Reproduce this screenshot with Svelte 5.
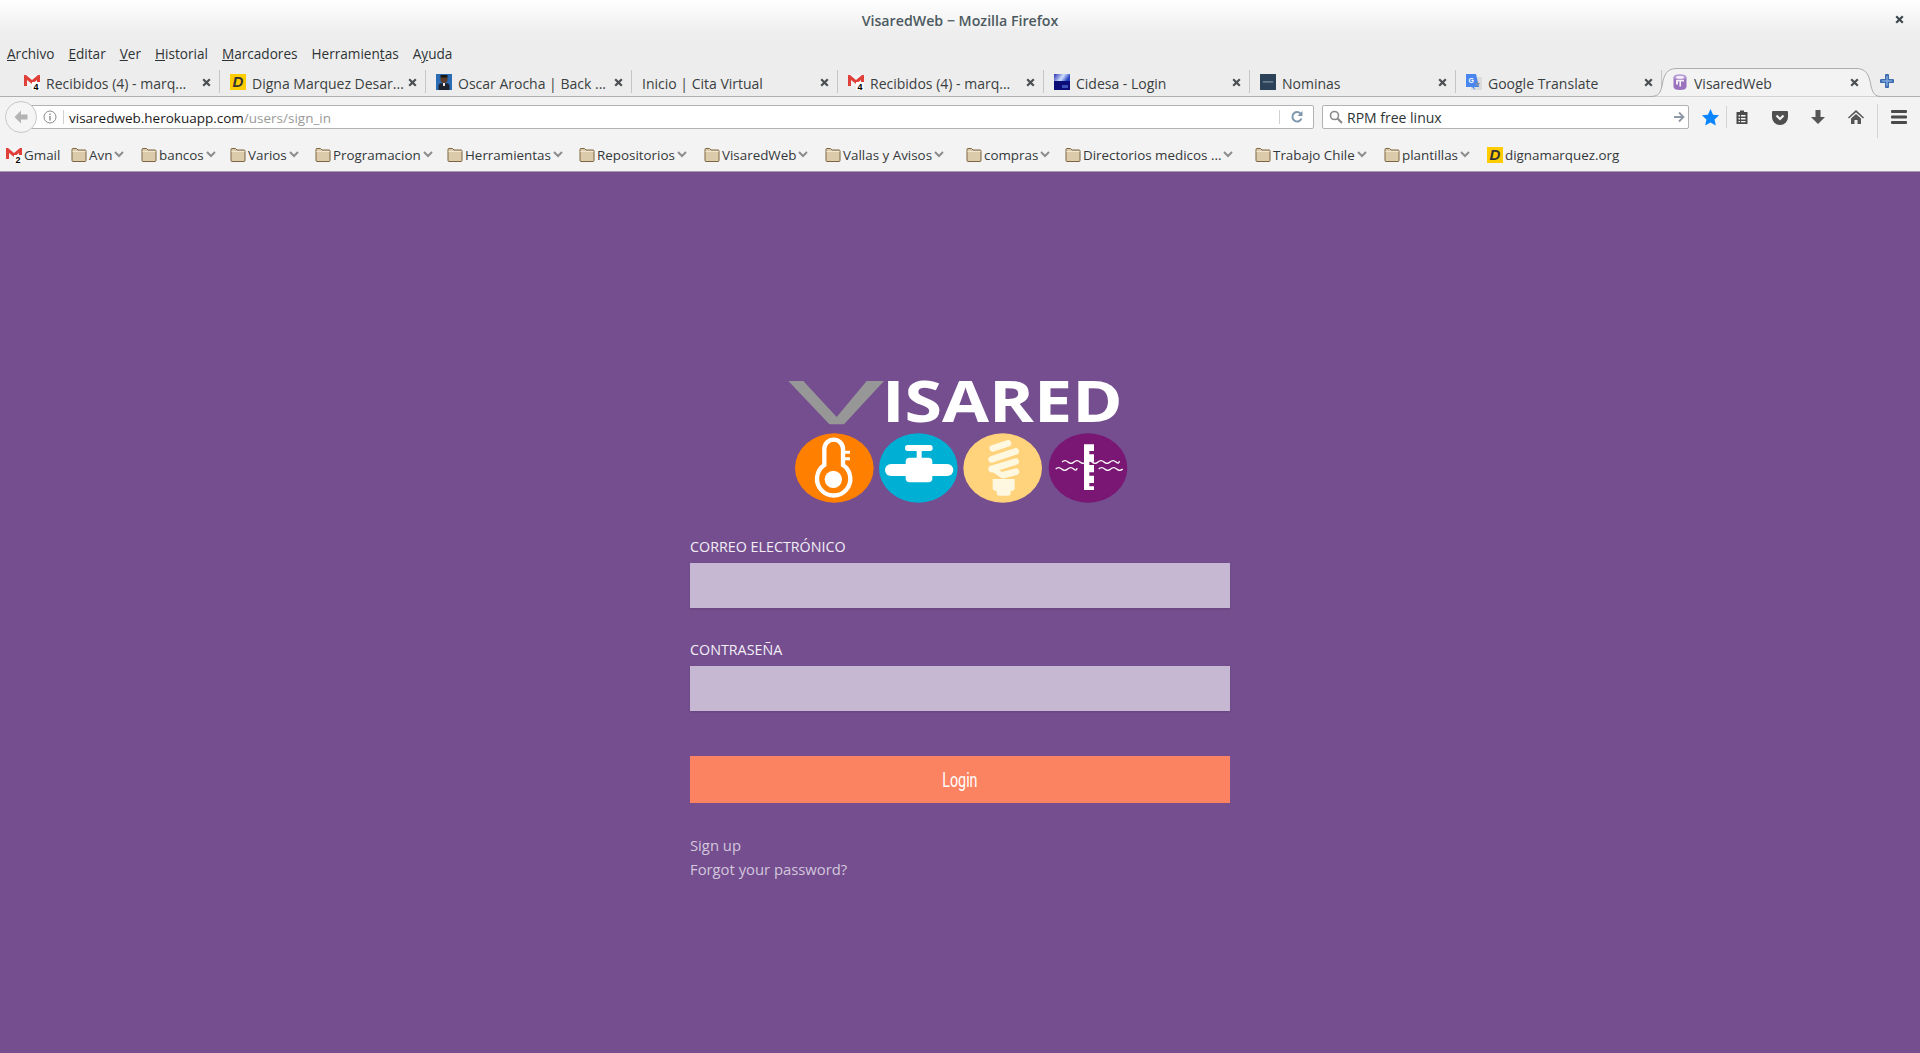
<script>
	const menus = [
		['', 'A', 'rchivo'],
		['', 'E', 'ditar'],
		['', 'V', 'er'],
		['', 'H', 'istorial'],
		['', 'M', 'arcadores'],
		['Herramien', 't', 'as'],
		['A', 'y', 'uda']
	];

	const tabs = [
		{ title: 'Recibidos (4) - marq...', icon: 'gmail' },
		{ title: 'Digna Marquez Desar...', icon: 'digna' },
		{ title: 'Oscar Arocha | Back ...', icon: 'oscar' },
		{ title: 'Inicio | Cita Virtual', icon: 'none' },
		{ title: 'Recibidos (4) - marq...', icon: 'gmail' },
		{ title: 'Cidesa - Login', icon: 'cidesa' },
		{ title: 'Nominas', icon: 'nominas' },
		{ title: 'Google Translate', icon: 'translate' }
	];

	const bookmarks = [
		{ label: 'Avn', w: 70 },
		{ label: 'bancos', w: 89 },
		{ label: 'Varios', w: 85 },
		{ label: 'Programacion', w: 132 },
		{ label: 'Herramientas', w: 132 },
		{ label: 'Repositorios', w: 125 },
		{ label: 'VisaredWeb', w: 121 },
		{ label: 'Vallas y Avisos', w: 141 },
		{ label: 'compras', w: 99 },
		{ label: 'Directorios medicos ...', w: 190 },
		{ label: 'Trabajo Chile', w: 129 },
		{ label: 'plantillas', w: 103 }
	];
</script>

{#snippet favicon(kind, num = '4')}
	{#if kind === 'gmail'}
		<svg class="fav" viewBox="0 0 16 16">
			<rect x="0" y="1" width="16" height="11" fill="#f4f4f4" />
			<path d="M0 1h2l6 5 6-5h2v11h-3V6L8 10 3 6v6H0z" fill="#e0403a" />
			<rect x="8" y="8" width="8" height="8" fill="#fff" />
			<text x="9.500" y="15.500" class="fav-num">{num}</text>
		</svg>
	{:else if kind === 'digna'}
		<span class="fav fav-d">D</span>
	{:else if kind === 'oscar'}
		<svg class="fav" viewBox="0 0 16 16">
			<rect width="16" height="16" fill="#2b6cb5" />
			<circle cx="8" cy="5.500" r="3.600" fill="#5c3d2a" />
			<rect x="4.500" y="1" width="7" height="2.600" fill="#1d1712" />
			<path d="M2.500 16v-4q0-2.500 3-2.800h5q3 .3 3 2.800v4z" fill="#1d2430" />
			<rect x="7" y="9" width="2" height="3" fill="#e8e8e8" />
		</svg>
	{:else if kind === 'cidesa'}
		<svg class="fav" viewBox="0 0 16 16">
			<defs>
				<linearGradient id="cid" x1="0" y1="0" x2="1" y2="0.3">
					<stop offset="0" stop-color="#2a2fb0" />
					<stop offset="0.6" stop-color="#cfe0ff" />
					<stop offset="1" stop-color="#2a44c0" />
				</linearGradient>
			</defs>
			<rect width="16" height="16" fill="#0c0c78" />
			<rect width="16" height="7" fill="url(#cid)" />
			<rect x="8" y="11" width="6" height="3" fill="#3a50b8" />
		</svg>
	{:else if kind === 'nominas'}
		<svg class="fav" viewBox="0 0 16 16">
			<rect width="16" height="16" fill="#2c4258" />
			<rect x="3" y="7.300" width="10" height="1.200" fill="#8496a6" />
		</svg>
	{:else if kind === 'translate'}
		<svg class="fav" viewBox="0 0 16 16">
			<rect x="5" y="3" width="11" height="13" fill="#dcdcdc" />
			<path d="M0 0h10l3 13H8l1 3-3-3H0z" fill="#4a86f0" />
			<text x="2.600" y="8.600" class="fav-g">G</text>
			<path d="M11.500 7l.8 2h2l-1.600 1.400.6 2.100-1.800-1.200-1.600 1.200.5-2.100L9 9h2z" fill="#7d8fa8" />
		</svg>
	{:else if kind === 'visared'}
		<svg class="fav" viewBox="0 0 16 16">
			<path d="M1.500 3.500v9Q1.500 16 8 16t6.500-3.500v-9z" fill="#9a72bd" />
			<ellipse cx="8" cy="3.200" rx="6.500" ry="3" fill="#b79ad1" />
			<ellipse cx="8" cy="3.200" rx="4" ry="1.500" fill="#f3eef7" />
			<path d="M4 6h8v1.600H9v5H7.400v-5H6v3H4z" fill="#f3eef7" />
		</svg>
	{/if}
{/snippet}

{#snippet folder()}
	<svg class="folder" viewBox="0 0 16 16">
		<path
			d="M1 4V2.500Q1 1.500 2 1.500h3.500L7 3h7q1 0 1 1v9.500q0 1-1 1H2q-1 0-1-1z"
			fill="#dccbaa"
			stroke="#7d6542"
		/>
		<path d="M1.500 4.500h13" stroke="#f0e6d0" />
	</svg>
{/snippet}

{#snippet chevron()}
	<svg class="chev" viewBox="0 0 10 7">
		<path d="M1 1l4 4 4-4" fill="none" stroke="#8d8d8d" stroke-width="2" />
	</svg>
{/snippet}

{#snippet closeX()}
	<svg class="close" viewBox="0 0 9 9">
		<path d="M1.200 1.200l6.600 6.600M7.800 1.200L1.200 7.800" stroke="#4b4f52" stroke-width="2.200" />
	</svg>
{/snippet}

<div class="browser">
	<header class="titlebar">
		<span class="title">VisaredWeb − Mozilla Firefox</span>
		<svg class="win-close" viewBox="0 0 9 9">
			<path d="M1.200 1.200l6.600 6.600M7.800 1.200L1.200 7.800" stroke="#3e4a50" stroke-width="2.200" />
		</svg>
	</header>

	<nav class="menubar">
		{#each menus as [before, key, after]}
			<span class="menu">{before}<u>{key}</u>{after}</span>
		{/each}
	</nav>

	<div class="tabstrip">
		{#each tabs as tab}
			<div class="tab">
				{#if tab.icon !== 'none'}
					<span class="fav-slot">{@render favicon(tab.icon)}</span>
				{/if}
				<span class="tab-title">{tab.title}</span>
				{@render closeX()}
			</div>
		{/each}
		<div class="tab tab-active">
			<svg class="tab-shape" viewBox="0 0 232 29">
				<path
					d="M0 28.500C8 28.500 10 26 12 18 14 6 17 .5 27 .5H206C216 .5 219 6 221 18 223 26 225 28.500 232 28.500"
					fill="#f3f3f3"
					stroke="#a9adaf"
				/>
			</svg>
			<span class="fav-slot">{@render favicon('visared')}</span>
			<span class="tab-title">VisaredWeb</span>
			{@render closeX()}
		</div>
		<svg class="newtab" viewBox="0 0 14 14">
			<path d="M7 1.500v11M1.500 7h11" stroke="#3c6cae" stroke-width="4" stroke-linecap="round" />
			<path d="M7 2.500v9M2.500 7h9" stroke="#7ea6dc" stroke-width="1.500" stroke-linecap="round" />
		</svg>
	</div>

	<div class="navbar">
		<button class="back" aria-label="Atrás">
			<svg viewBox="0 0 16 16" width="16" height="16">
				<path d="M8 1.500L1.500 8 8 14.500V10.500h6.500v-5H8z" fill="#b4b4b4" />
			</svg>
		</button>
		<div class="urlbar">
			<svg class="info" viewBox="0 0 14 14">
				<circle cx="7" cy="7" r="6" fill="none" stroke="#8a8a8a" />
				<rect x="6.300" y="6" width="1.400" height="4.500" fill="#8a8a8a" />
				<rect x="6.300" y="3.500" width="1.400" height="1.500" fill="#8a8a8a" />
			</svg>
			<span class="url">visaredweb.herokuapp.com<span class="url-path">/users/sign_in</span></span>
			<svg class="reload" viewBox="0 0 14 14">
				<path d="M11.500 8.500A4.700 4.700 0 1 1 10.500 3.500" fill="none" stroke="#7f97ad" stroke-width="2" />
				<path d="M12.500 1v5h-5z" fill="#7f97ad" />
			</svg>
		</div>
		<div class="searchbar">
			<svg class="mag" viewBox="0 0 14 14">
				<circle cx="5.500" cy="5.500" r="4" fill="none" stroke="#8a8a8a" stroke-width="1.600" />
				<path d="M8.500 8.500l4.500 4.500" stroke="#8a8a8a" stroke-width="2.200" />
			</svg>
			<span class="query">RPM free linux</span>
			<svg class="go" viewBox="0 0 12 12">
				<path d="M1 6h9M6 1.500L10.500 6 6 10.500" fill="none" stroke="#8d99a6" stroke-width="1.800" />
			</svg>
		</div>
		<div class="tools">
			<svg class="tool star" viewBox="0 0 20 20">
				<path d="M10 1l2.700 6 6.300.7-4.700 4.300 1.300 6.500L10 15.200 4.400 18.500l1.300-6.500L1 7.700 7.300 7z" fill="#0a84ff" />
			</svg>
			<span class="vsep"></span>
			<svg class="tool clip" viewBox="0 0 16 16">
				<path d="M6 1.500h4V3h3.500v12h-11V3H6z" fill="#4a4a4a" />
				<path d="M4.500 6h1.500v1.500H4.500zM7 6h4.500v1.500H7zM4.500 9h1.500v1.500H4.500zM7 9h4.500v1.500H7zM4.500 12h1.500v1.200H4.500zM7 12h4.500v1.200H7z" fill="#f3f3f3" />
			</svg>
			<svg class="tool pocket" viewBox="0 0 16 16">
				<path d="M1 2h14q1 0 1 1v5A8 8 0 0 1 0 8V3q0-1 1-1z" fill="#4f4f4f" />
				<path d="M4.500 6.500L8 10l3.500-3.500" fill="none" stroke="#f3f3f3" stroke-width="2.200" />
			</svg>
			<svg class="tool down" viewBox="0 0 16 16">
				<path d="M5.500 1h5v7H15l-7 7-7-7h4.500z" fill="#555" />
			</svg>
			<svg class="tool home" viewBox="0 0 16 16">
				<path d="M8 1L0 8.500l1 1L8 3.200l7 6.300 1-1z" fill="#555" />
				<path d="M3 9.500L8 5l5 4.500V15H9.500v-4h-3v4H3z" fill="#555" />
			</svg>
			<span class="vsep tall"></span>
			<svg class="tool burger" viewBox="0 0 16 14">
				<path d="M1 0h14q1 0 1 1v1q0 1-1 1H1Q0 3 0 2V1q0-1 1-1zM1 5.500h14q1 0 1 1v1q0 1-1 1H1q-1 0-1-1v-1q0-1 1-1zM1 11h14q1 0 1 1v1q0 1-1 1H1q-1 0-1-1v-1q0-1 1-1z" fill="#4a4a4a" />
			</svg>
		</div>
	</div>

	<div class="bookmarks">
		<div class="bookmark gmail-mark">
			<span class="fav-slot">{@render favicon('gmail', '2')}</span>
			<span>Gmail</span>
		</div>
		{#each bookmarks as mark}
			<div class="bookmark" style="width: {mark.w}px">
				{@render folder()}
				<span class="mark-label">{mark.label}</span>
				{@render chevron()}
			</div>
		{/each}
		<div class="bookmark">
			<span class="fav-slot">{@render favicon('digna')}</span>
			<span>dignamarquez.org</span>
		</div>
	</div>

	<main class="page">
		<div class="login">
			<svg class="logo" viewBox="0 0 1140 450" role="img" aria-label="Visared">
				<path d="M55 48h45l100 108 90-108h52L222 178h-44z" fill="#979797" />
				<text x="336" y="172" class="logo-text" textLength="722" lengthAdjust="spacingAndGlyphs">ISARED</text>

				<ellipse cx="193" cy="309" rx="118" ry="104" fill="#ff7f00" />
				<path
					d="M163 300V252a28 28 0 0 1 56 0V300a50 50 0 1 1-56 0z"
					fill="none"
					stroke="#fff"
					stroke-width="13"
				/>
				<circle cx="190" cy="343" r="26" fill="#fff" />
				<path d="M222 262h18M222 281h18" stroke="#fff" stroke-width="9" />

				<ellipse cx="445" cy="309" rx="118" ry="104" fill="#00afd4" />
				<rect x="345" y="297" width="205" height="36" rx="18" fill="#fff" />
				<rect x="407" y="278" width="80" height="74" rx="12" fill="#fff" />
				<rect x="440" y="245" width="15" height="40" fill="#fff" />
				<rect x="405" y="240" width="83" height="18" rx="8" fill="#fff" />

				<ellipse cx="698" cy="309" rx="118" ry="104" fill="#ffd27c" />
				<g stroke="#fff8e0" stroke-width="20" stroke-linecap="round">
					<path d="M668 250l46-15" />
					<path d="M665 283l72-24" />
					<path d="M665 312l72-22" />
					<path d="M700 330l38-10" />
				</g>
				<path d="M668 342h66v28q0 8-12 8v8q0 6-8 6h-26q-8 0-8-6v-8q-12 0-12-8z" fill="#fff8e0" />
				<path d="M665 310l30 20" stroke="#fff8e0" stroke-width="16" stroke-linecap="round" />

				<ellipse cx="954" cy="309" rx="118" ry="104" fill="#7a1673" />
				<path
					d="M942 238h30v20h-14v10h14v22h-14v10h14v22h-14v10h14v22h-14v10h14v11h-30z"
					fill="#fff"
				/>
				<g fill="none" stroke="#fff" stroke-width="4">
					<path d="M876 291q9-8 18 0t18 0 18 0 18 0 18 0 18 0 18 0 18 0 18 0 10-3" />
					<path d="M857 312q9-8 18 0t18 0 18 0 10-3M986 312q9-8 18 0t18 0 18 0 18 0" />
				</g>
			</svg>

			<form class="form">
				<label for="email">CORREO ELECTRÓNICO</label>
				<input id="email" type="email" />
				<label for="password" class="second">CONTRASEÑA</label>
				<input id="password" type="password" />
				<button type="button" class="submit"><span>Login</span></button>
			</form>

			<div class="links">
				<span>Sign up</span>
				<span>Forgot your password?</span>
			</div>
		</div>
	</main>
</div>

<style>
	:global(body) {
		margin: 0;
		background: #744e8f;
	}

	.browser {
		height: 1053px;
		display: flex;
		flex-direction: column;
		overflow: hidden;
		font-family: 'Open Sans', sans-serif;
		font-size: 14px;
		color: #2e3436;
	}

	.titlebar {
		height: 40px;
		flex: none;
		display: flex;
		align-items: center;
		justify-content: center;
		position: relative;
		background: linear-gradient(#ffffff, #ededed 34px);
	}

	.title {
		font-weight: 600;
		font-size: 14.2px;
		color: #4c5a60;
	}

	.win-close {
		position: absolute;
		right: 16px;
		top: 15px;
		width: 9px;
		height: 9px;
	}

	.menubar {
		height: 28px;
		flex: none;
		box-sizing: border-box;
		display: flex;
		align-items: center;
		gap: 14px;
		padding: 0 0 2px 7px;
		font-size: 13.6px;
		background: #ededed;
	}

	.tabstrip {
		height: 28px;
		flex: none;
		display: flex;
		padding-left: 14px;
		background: #ededed;
		border-bottom: 1px solid #adb0b2;
		position: relative;
	}

	.tab {
		width: 206px;
		height: 28px;
		flex: none;
		box-sizing: border-box;
		display: flex;
		align-items: center;
		padding-left: 10px;
		position: relative;
		color: #3a3f41;
	}

	.tab::after {
		content: '';
		position: absolute;
		right: 0;
		top: 2px;
		bottom: 3px;
		width: 1px;
		background: #c6c6c6;
	}

	.tab-active::after {
		display: none;
	}

	.tab-shape {
		position: absolute;
		left: -12px;
		top: 0;
		width: 232px;
		height: 29px;
	}

	.tab-active > :not(.tab-shape) {
		position: relative;
	}

	.fav-slot {
		width: 16px;
		height: 16px;
		flex: none;
		margin-right: 6px;
		display: block;
	}

	.fav {
		display: block;
		width: 16px;
		height: 16px;
	}

	.fav-num {
		font-family: 'Liberation Sans', sans-serif;
		font-size: 9px;
		font-weight: 700;
		fill: #000;
	}

	.fav-g {
		font-family: 'Liberation Sans', sans-serif;
		font-size: 7px;
		font-weight: 700;
		fill: #fff;
	}

	.fav-d {
		background: #ffcc00;
		color: #333;
		font: italic 700 15px/16px 'Liberation Sans', sans-serif;
		text-align: center;
	}

	.tab-title {
		flex: 1;
		padding-top: 2px;
		white-space: nowrap;
		overflow: hidden;
	}

	.close {
		width: 9px;
		height: 9px;
		flex: none;
		margin-right: 9px;
	}

	.newtab {
		width: 14px;
		height: 14px;
		margin: 6px 0 0 12px;
	}

	.navbar {
		height: 43px;
		flex: none;
		box-sizing: border-box;
		display: flex;
		align-items: flex-start;
		padding: 8px 0 0 5px;
		background: #f3f3f3;
	}

	.back {
		width: 32px;
		height: 32px;
		flex: none;
		margin: -4px -7px 0 0;
		padding: 0;
		display: flex;
		align-items: center;
		justify-content: center;
		position: relative;
		z-index: 1;
		border: 1px solid #c8c8c8;
		border-radius: 50%;
		background: #f5f5f5;
	}

	.urlbar,
	.searchbar {
		height: 24px;
		box-sizing: border-box;
		flex: none;
		display: flex;
		align-items: center;
		background: #fff;
		border: 1px solid #b2b2b2;
		border-radius: 2px;
	}

	.urlbar {
		width: 1284px;
		padding-left: 12px;
	}

	.info {
		width: 14px;
		height: 14px;
		padding-right: 6px;
		border-right: 1px solid #d0d0d0;
		flex: none;
	}

	.url {
		flex: 1;
		margin-left: 5px;
		padding-top: 1px;
		font-size: 13.5px;
		color: #1a1a1a;
	}

	.url-path {
		color: #9a9a9a;
	}

	.reload {
		width: 14px;
		height: 14px;
		padding: 0 9px 0 10px;
		border-left: 1px solid #d0d0d0;
	}

	.searchbar {
		width: 367px;
		margin-left: 8px;
		padding: 0 3px 0 6px;
	}

	.mag {
		width: 14px;
		height: 14px;
		flex: none;
	}

	.query {
		flex: 1;
		margin-left: 4px;
		padding-top: 1px;
	}

	.go {
		width: 12px;
		height: 12px;
	}

	.tools {
		display: flex;
		align-items: center;
		height: 24px;
		position: relative;
		flex: 1;
	}

	.tool {
		flex: none;
	}

	.star {
		width: 19px;
		height: 19px;
		margin-left: 12px;
	}

	.vsep {
		width: 1px;
		height: 22px;
		flex: none;
		margin-left: 6px;
		background: #d4d4d4;
	}

	.vsep.tall {
		height: 34px;
		margin: 8px 0 0 13px;
	}

	.clip {
		width: 16px;
		height: 16px;
		margin-left: 7px;
	}

	.pocket {
		width: 16px;
		height: 16px;
		margin-left: 22px;
	}

	.down {
		width: 16px;
		height: 16px;
		margin-left: 22px;
	}

	.home {
		width: 16px;
		height: 16px;
		margin-left: 22px;
	}

	.burger {
		width: 16px;
		height: 14px;
		margin-left: 13px;
	}

	.bookmarks {
		height: 32px;
		flex: none;
		box-sizing: border-box;
		display: flex;
		align-items: center;
		padding: 0 0 2px 6px;
		font-size: 13.4px;
		background: #f3f3f3;
		border-bottom: 1px solid #a49aaa;
		color: #33383a;
	}

	.bookmark {
		display: flex;
		align-items: center;
		flex: none;
		white-space: nowrap;
	}

	.gmail-mark {
		width: 65px;
	}

	.bookmark > .fav-slot:first-child {
		margin-right: 2px;
	}

	.folder {
		width: 16px;
		height: 16px;
		flex: none;
		margin-right: 2px;
	}

	.chev {
		width: 10px;
		height: 7px;
		flex: none;
		margin-left: 2px;
	}

	.page {
		flex: 1;
		background: #744e8f;
	}

	.login {
		width: 540px;
		margin: 0 auto;
		padding-top: 193px;
		color: #fff;
	}

	.logo {
		display: block;
		width: 380px;
		height: 150px;
		margin: 0 auto;
		overflow: visible;
	}

	.logo-text {
		font-family: 'Open Sans', sans-serif;
		font-weight: 700;
		font-size: 172px;
		fill: #fff;
	}

	.form {
		display: flex;
		flex-direction: column;
		padding-top: 22px;
	}

	label {
		height: 20px;
		line-height: 20px;
		margin-bottom: 6px;
		font-size: 14.3px;
		color: #f3eef6;
	}

	.second {
		margin-top: 32px;
	}

	input {
		height: 45px;
		box-sizing: border-box;
		border: none;
		border-radius: 0;
		background: #c6b8d2;
		box-shadow: 0 1px 2px rgba(0, 0, 0, 0.12);
	}

	.submit {
		height: 47px;
		margin-top: 45px;
		padding: 0;
		border: none;
		background: #fc8362;
		color: #fff;
		font-family: Roboto, sans-serif;
		font-size: 21px;
		font-weight: 400;
	}

	.submit span {
		display: inline-block;
		transform: scaleX(0.68);
	}

	.links {
		display: flex;
		flex-direction: column;
		padding-top: 30px;
		font-size: 14.8px;
		line-height: 24px;
		color: #d3c7dc;
	}
</style>
